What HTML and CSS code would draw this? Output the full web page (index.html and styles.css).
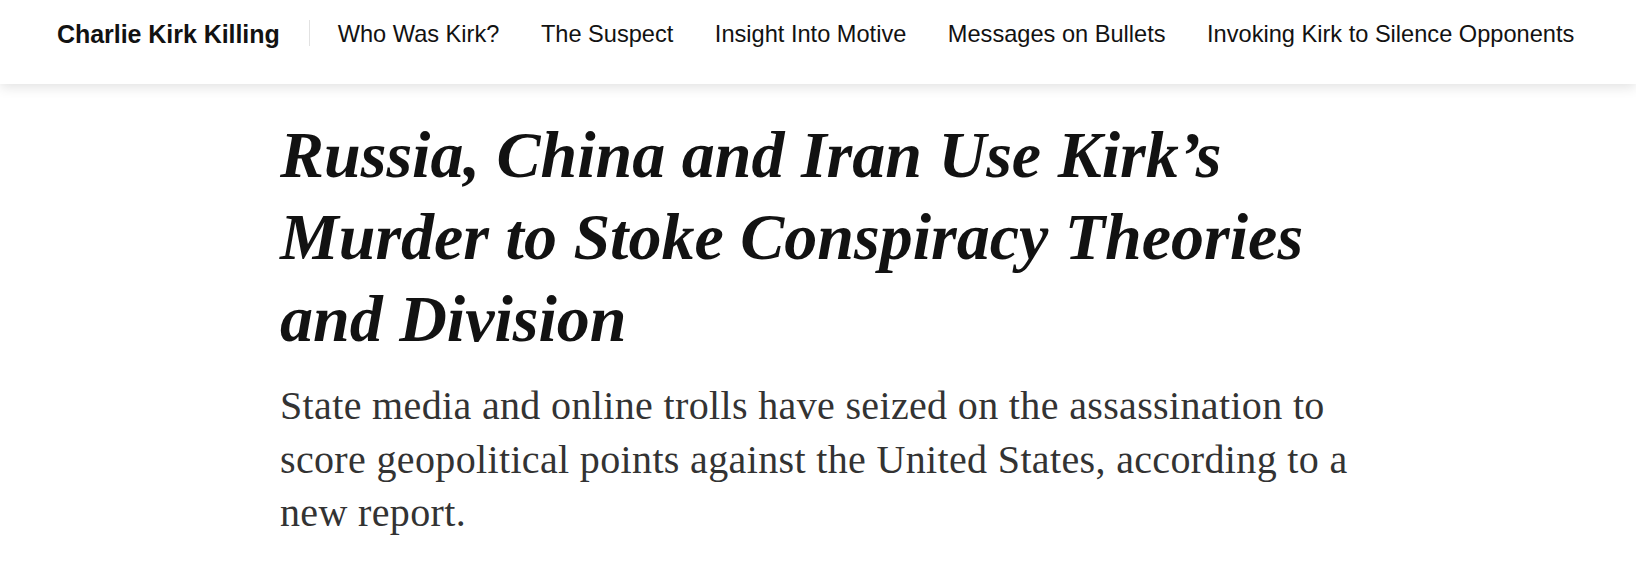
FILE: index.html
```html
<!DOCTYPE html>
<html lang="en">
<head>
<meta charset="utf-8">
<title>Russia, China and Iran Use Kirk’s Murder to Stoke Conspiracy Theories and Division</title>
<link rel="stylesheet" href="styles.css">
</head>
<body>
<header class="topbar">
  <nav class="nav">
    <a class="nav-title" href="#">Charlie Kirk Killing</a>
    <span class="nav-sep"></span>
    <ul class="nav-list">
      <li><a href="#">Who Was Kirk?</a></li>
      <li><a href="#">The Suspect</a></li>
      <li><a href="#">Insight Into Motive</a></li>
      <li><a href="#">Messages on Bullets</a></li>
      <li><a href="#">Invoking Kirk to Silence Opponents</a></li>
    </ul>
  </nav>
</header>
<main class="article">
  <h1 class="headline">Russia, China and Iran Use Kirk’s Murder to Stoke Conspiracy Theories and Division</h1>
  <p class="deck">State media and online trolls have seized on the assassination to score geopolitical points against the United States, according to a new report.</p>
</main>
</body>
</html>
```
FILE: styles.css
```css
* { box-sizing: border-box; }
html, body { margin: 0; padding: 0; background: #fff; }
body { color: #121212; }

.topbar {
  height: 84px;
  background: #fff;
  box-shadow: 0 3px 12px rgba(0, 0, 0, 0.12);
  position: relative;
  z-index: 1;
}
.nav {
  display: flex;
  align-items: flex-start;
  padding: 20px 0 0 57px;
  font-family: "Liberation Sans", Arial, sans-serif;
  font-size: 23.6px;
  line-height: 28px;
}
.nav a { color: #121212; text-decoration: none; }
.nav-title { font-weight: 700; font-size: 25px; letter-spacing: -0.05px; }
.nav-sep {
  width: 1px;
  height: 26px;
  background: #e2e2e2;
  margin: 0 28px 0 29px;
}
.nav-list {
  display: flex;
  gap: 41.5px;
  list-style: none;
  margin: 0;
  padding: 0;
}

.article {
  width: 1076px;
  margin: 0 auto;
  padding-top: 30px;
}
.headline {
  margin: 0;
  font-family: "Liberation Serif", "Times New Roman", serif;
  font-style: italic;
  font-weight: 700;
  font-size: 66px;
  line-height: 82px;
  color: #121212;
}
.deck {
  margin: 19px 0 0;
  font-family: "Liberation Serif", "Times New Roman", serif;
  font-size: 40px;
  letter-spacing: 0.35px;
  line-height: 53.5px;
  color: #333;
}
```
